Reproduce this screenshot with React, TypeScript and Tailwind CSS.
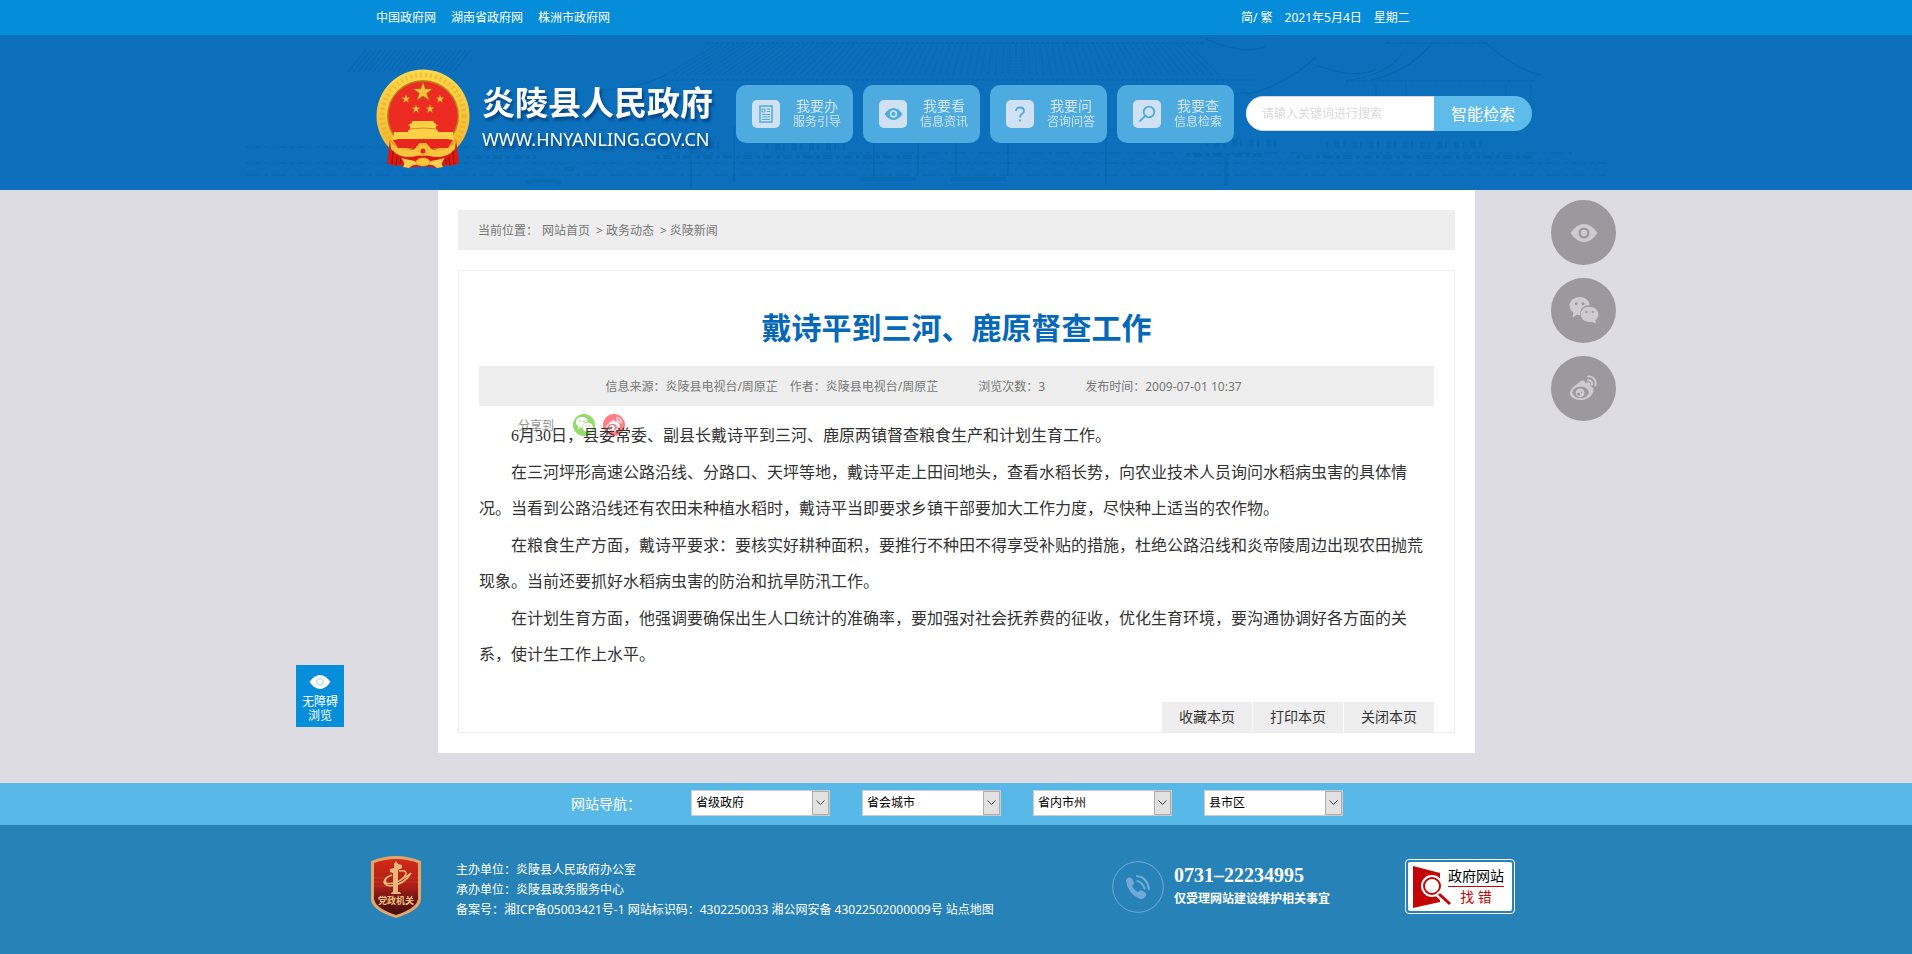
import type { ReactNode } from 'react';

const topLinks = ['中国政府网', '湖南省政府网', '株洲市政府网'];

const selects = [
  { id: 'province', label: '省级政府' },
  { id: 'capital', label: '省会城市' },
  { id: 'city', label: '省内市州' },
  { id: 'county', label: '县市区' },
];

const paragraphs = [
  <><span className="font-['Liberation_Serif'] leading-none">6</span>月<span className="font-['Liberation_Serif'] leading-none">30</span>日，县委常委、副县长戴诗平到三河、鹿原两镇督查粮食生产和计划生育工作。</>,
  '在三河坪形高速公路沿线、分路口、天坪等地，戴诗平走上田间地头，查看水稻长势，向农业技术人员询问水稻病虫害的具体情况。当看到公路沿线还有农田未种植水稻时，戴诗平当即要求乡镇干部要加大工作力度，尽快种上适当的农作物。',
  '在粮食生产方面，戴诗平要求：要核实好耕种面积，要推行不种田不得享受补贴的措施，杜绝公路沿线和炎帝陵周边出现农田抛荒现象。当前还要抓好水稻病虫害的防治和抗旱防汛工作。',
  '在计划生育方面，他强调要确保出生人口统计的准确率，要加强对社会抚养费的征收，优化生育环境，要沟通协调好各方面的关系，使计生工作上水平。',
];

const star = 'M0 -10 2.3 -3.1 9.5 -3.1 3.8 1.2 5.9 8.1 0 4 -5.9 8.1 -3.8 1.2 -9.5 -3.1 -2.3 -3.1Z';

function Emblem() {
  return (
    <svg viewBox="0 0 94 100" className="h-[100px] w-[94px] shrink-0" aria-hidden="true">
      <defs>
        <linearGradient id="gold" x1="0" y1="0" x2="0" y2="1">
          <stop offset="0" stopColor="#ffd94a" />
          <stop offset="1" stopColor="#f1b32c" />
        </linearGradient>
      </defs>
      <circle cx="47" cy="47" r="46.5" fill="url(#gold)" />
      <circle cx="47" cy="47" r="41" fill="none" stroke="#e3a02a" strokeWidth="5" strokeDasharray="2 3" opacity=".45" />
      <circle cx="47" cy="47" r="36" fill="#b9811c" />
      <circle cx="47" cy="47" r="34.5" fill="#ee2b23" />
      <path d="M18 63h59l1 7H17z" fill="#ffd145" />
      <path d="M32 61h30v3H32zM34 55h26v6H34zM32 57l3-3h24l3 3zM36 52h22v2H36z" fill="#ffcf45" />
      <path d="M33 60q14-2 28 0" stroke="#d38d1d" fill="none" />
      <path d="M17 71h60l-5 8H22z" fill="#e8251e" />
      <path d="M14 71 11 94Q18 98 24 96L31 99Q47 96 63 99L70 96Q76 98 83 94L80 71 68 84Q47 90 26 84Z" fill="#dc1a13" />
      <path d="M14 71Q20 81 32 82 39 82 41 77L44 74H50L53 77Q55 82 62 82 74 81 80 71L79 80Q71 89 60 88 51 87 47 84 43 87 34 88 23 89 15 80Z" fill="#f8c63e" />
      <path d="M17 82 16 95M21 87 20 96M25 89 24 95M77 82 78 95M73 87 74 96M69 89 70 95" stroke="#a50d0b" strokeWidth="1.200" />
      <path d="M25 89Q33 91 39 92L42 96Q37 95 33 99L27 98Q30 94 25 89ZM69 89Q61 91 55 92L52 96Q57 95 61 99L67 98Q64 94 69 89Z" fill="#fbcf50" />
      <circle cx="47" cy="80" r="5" fill="#f9c63c" stroke="#e49f20" strokeDasharray="2 1" />
      <circle cx="47" cy="82" r="2.500" fill="#e8251e" />
      <ellipse cx="47" cy="93" rx="7" ry="4" fill="#f9c63c" stroke="#e49f20" strokeDasharray="2 1" />
      <g fill="#f6c23b" stroke="#a9741b" strokeWidth=".8">
        <path d={star} transform="translate(47 23)" />
        <path d={star} transform="translate(30 30) scale(.45)" />
        <path d={star} transform="translate(64 30) scale(.45)" />
        <path d={star} transform="translate(40 40) scale(.45)" />
        <path d={star} transform="translate(54 40) scale(.45)" />
      </g>
    </svg>
  );
}

// Faint palace roofs and columns behind the header
function Skyline() {
  return (
    <svg viewBox="0 0 1500 155" className="absolute top-0 left-1/2 h-[155px] w-[1500px] -translate-x-1/2" fill="none" stroke="#084f8c" aria-hidden="true">
      <g opacity=".2" strokeWidth="1.2">
        {Array.from({ length: 80 }, (_, i) => (
          <path key={i} d={`M${510 + i * 6} 10L${460 + i * 7} 40`} strokeDasharray="2 1" />
        ))}
        {Array.from({ length: 22 }, (_, i) => (
          <path key={i} d={`M${160 + i * 5} 15l-18 22`} />
        ))}
      </g>
      <g opacity=".28" strokeWidth="1.2">
        <path d="M500 8H1000M455 45H1050" strokeDasharray="3 2" />
        <path d="M460 40Q430 55 390 55M1000 4Q1035 20 1060 12M1040 60Q1080 50 1110 22M1110 30Q1150 45 1170 34M1165 45Q1200 38 1225 10M1050 57Q1020 60 960 62" />
        <path d="M1180 8H1280M1280 8Q1310 35 1335 40M1195 20Q1180 40 1140 46H1330M1170 50v18M1200 50v18M1300 50v18M1325 50v18" strokeDasharray="5 1" />
        <path d="M40 128H1400M40 112H360M460 118H1370M40 140H1400" strokeDasharray="14 5 3 4" opacity=".7" />
      </g>
      <g opacity=".2" strokeWidth="4">
        <path d="M450 122H720M980 120H1060M1090 122H1330M260 122H330" strokeDasharray="4 3 9 4" />
        <path d="M485 92v60M528 92v55M668 92v50M712 90v50M750 90v50M802 90v50M900 100v50" strokeWidth="2" />
        <path d="M460 110h60M560 112h80M1000 108h70M1120 110h160" strokeWidth="7" strokeDasharray="2 7 5 3" />
        <path d="M320 148q18-6 35 0M358 134h10M655 144h55M745 144h55M1020 150v-28" strokeWidth="4" />
      </g>
    </svg>
  );
}

function EyeIcon({ className, pupil }: { className: string; pupil: string }) {
  return (
    <svg viewBox="0 0 30 20" className={className} aria-hidden="true">
      <path d="M0 10Q7 0 15 0t15 10Q23 20 15 20T0 10Z" fill="currentColor" />
      <circle cx="15" cy="10" r="4.800" fill="none" stroke={pupil} strokeWidth="2.600" />
    </svg>
  );
}

function WechatIcon({ className, eye }: { className: string; eye: string }) {
  return (
    <svg viewBox="0 0 30 28" className={className} aria-hidden="true">
      <path d="M10.500 0C4.700 0 0 4 0 9c0 3 1.600 5.400 4 7l-1 5.500 4.500-3 3.500.3A9 9 0 0 1 21 8.500C20.500 3.500 16 0 10.500 0Z" fill="currentColor" />
      <path d="M20.500 10C15.300 10 11.500 13.700 11.500 18c0 4.500 4 8 9 8l3.300-.4 3.700 2.400-.8-3.800C28.800 22.600 30 20.500 30 18c0-4.300-4-8-9.500-8Z" fill="currentColor" />
      <g fill={eye}>
        <circle cx="7" cy="7" r="1.500" /><circle cx="14" cy="7" r="1.500" />
        <circle cx="17.500" cy="15.500" r="1.200" /><circle cx="24" cy="15.500" r="1.200" />
      </g>
    </svg>
  );
}

function WeiboIcon({ className, hole }: { className: string; hole: string }) {
  return (
    <svg viewBox="0 0 28 28" className={className} aria-hidden="true">
      <path d="M9 8c3-3 7-3.500 6.500.5 4-1.500 7-.5 5.500 3 3 1 4 3 3 6-1.500 5-7 8.500-13 8.500S0 23 0 18.500C0 15 4.500 11.500 9 8Z" fill="currentColor" />
      <ellipse cx="11" cy="18" rx="8.500" ry="6" fill={hole} />
      <circle cx="10.500" cy="18.500" r="4.600" fill="currentColor" />
      <circle cx="9" cy="20" r="1.500" fill={hole} /><circle cx="12" cy="18" r=".8" fill={hole} />
      <path d="M18.500 1.500c5-.8 9.500 4 7.800 9.200M18.500 5.500c2.800-.5 5 2 4.200 4.700" fill="none" stroke="currentColor" strokeWidth="2" strokeLinecap="round" />
    </svg>
  );
}

function QuickLink({ title, sub, children }: { title: string; sub: string; children: ReactNode }) {
  return (
    <a href="#" className="flex h-[58px] w-[117px] items-center gap-[13px] rounded-[10px] bg-[#4dabdf] pl-4 text-[#d3e4f3]">
      <span className="flex size-7 items-center justify-center rounded-[5px] bg-[#d0e2f2] text-[#4dabdf]">{children}</span>
      <span className="flex flex-col items-center text-xs leading-4">
        <span className="text-sm leading-4">{title}</span>
        {sub}
      </span>
    </a>
  );
}

function FloatButton({ label, children }: { label: string; children: ReactNode }) {
  return (
    <button aria-label={label} className="flex size-[65px] items-center justify-center rounded-full bg-[#9b999d] text-[#cdcccf]">
      {children}
    </button>
  );
}

function Shield() {
  return (
    <svg viewBox="0 0 52 64" className="h-16 w-[52px] shrink-0" role="img" aria-label="党政机关">
      <defs>
        <linearGradient id="shield" x1="0" y1="0" x2="0" y2="1">
          <stop offset="0" stopColor="#d42a18" />
          <stop offset=".5" stopColor="#a81f17" />
          <stop offset=".7" stopColor="#711713" />
          <stop offset="1" stopColor="#430d0c" />
        </linearGradient>
      </defs>
      <path d="M1 6Q14 1 26 1t25 5V44Q51 55 26 63 1 55 1 44Z" fill="#e2a768" />
      <path d="M4 8Q15 4 26 4t22 4V43Q48 53 26 60 4 53 4 43Z" fill="url(#shield)" />
      <path d="M4 23h10M38 23h10M4 27h12M36 27h12M4 31h13" stroke="#d33a20" strokeWidth=".7" />
      <path d="M24 9l2-3 2 3 4 1v3l-4 2v23h-5V18l-3-1v-3l4-1z" fill="#eab779" />
      <path d="M22 20Q13 23 16 28 25 31 41 18 34 30 20 31 10 29 17 22M29 16q7-1 7 2 0 4-7 8" fill="none" stroke="#eab779" strokeWidth="1.600" />
      <path d="M22 37h8l1 2H21z" fill="#eab779" />
      <text x="26" y="49" textAnchor="middle" fontSize="9" fontWeight="700" fill="#f0c083">党政机关</text>
    </svg>
  );
}

function ReportBadge() {
  return (
    <a href="#" className="block rounded-[4px] border border-white p-[2px]">
      <span className="flex h-[49px] w-[104px] items-center rounded-[2px] bg-white pl-1">
        <svg viewBox="0 0 40 44" className="h-11 w-10 shrink-0" aria-hidden="true">
          <path d="M1 1 28 8V37L1 43Z" fill="#c30508" />
          <circle cx="20" cy="21" r="11" fill="#fff" />
          <circle cx="20" cy="21" r="8" fill="none" stroke="#c30508" strokeWidth="2" />
          <path d="M25 28 38 41" stroke="#fff" strokeWidth="6" />
          <path d="M27 29 38 39" stroke="#c30508" strokeWidth="3" />
        </svg>
        <span className="-ml-1 flex flex-col items-center text-sm leading-5 text-black">
          <span className="border-b border-[#c30508]">政府网站</span>
          <span className="text-[#c30508]">找 错</span>
        </span>
      </span>
    </a>
  );
}

export default function App() {
  return (
    <div className="min-h-screen bg-[#dddce2] font-['Noto_Sans','Noto_Sans_CJK_SC',sans-serif] text-xs">
      <div className="bg-[#058dd9] text-white">
        <div className="mx-auto flex h-[35px] max-w-[1200px] items-center justify-between px-5">
          <nav className="flex gap-[15px]">
            {topLinks.map((l) => <a key={l} href="#">{l}</a>)}
          </nav>
          <div className="flex w-[295px] gap-3">
            <a href="#">简/ 繁</a>
            <span>2021年5月4日</span>
            <span>星期二</span>
          </div>
        </div>
      </div>

      <header className="relative overflow-hidden bg-[#0b6fbc]">
        <Skyline />
        <div className="relative mx-auto flex h-[155px] max-w-[1200px] items-center px-5 pt-[2px]">
          <a href="#" className="mt-[11px] flex w-[360px] items-center gap-3 text-white">
            <Emblem />
            <span className="flex flex-col whitespace-nowrap [text-shadow:2px_3px_3px_rgba(0,40,90,0.6)]">
              <span className="text-[33px] leading-10 font-bold">炎陵县人民政府</span>
              <span className="text-lg leading-8">WWW.HNYANLING.GOV.CN</span>
            </span>
          </a>
          <nav className="flex gap-[10px]">
            <QuickLink title="我要办" sub="服务引导">
              <svg viewBox="0 0 14 18" className="h-[18px] w-[14px]" fill="none" stroke="currentColor" aria-hidden="true">
                <rect x="1" y="1" width="12" height="16" strokeWidth="1.500" />
                <path d="M3 4h3v3H3zM8 4h3M8 6.500h3M3 9.500h8M3 12h8M3 14.500h8" />
              </svg>
            </QuickLink>
            <QuickLink title="我要看" sub="信息资讯">
              <EyeIcon className="h-3 w-[19px]" pupil="#d0e2f2" />
            </QuickLink>
            <QuickLink title="我要问" sub="咨询问答">
              <svg viewBox="0 0 12 16" className="h-4 w-3" fill="none" stroke="currentColor" strokeWidth="1.800" aria-hidden="true">
                <path d="M2 5Q2 1.500 6 1.500T10 5Q10 7 7.500 8.300 6 9.200 6 11.500M6 13.500v2" />
              </svg>
            </QuickLink>
            <QuickLink title="我要查" sub="信息检索">
              <svg viewBox="0 0 18 18" className="size-[18px]" fill="none" stroke="currentColor" strokeWidth="1.800" aria-hidden="true">
                <circle cx="11" cy="7" r="5.300" />
                <path d="M7 11 1.500 16.500" />
              </svg>
            </QuickLink>
          </nav>
          <form className="ml-3 flex h-[35px] shrink-0" onSubmit={(e) => e.preventDefault()}>
            <input
              type="text"
              aria-label="搜索"
              placeholder="请输入关键词进行搜索"
              className="w-[188px] rounded-l-full border-y border-[#d5d5d5] bg-white px-4 text-xs placeholder:text-[#d8d8d8]"
            />
            <button type="submit" className="w-[98px] rounded-r-full bg-[#5ebbea] text-base text-white">智能检索</button>
          </form>
        </div>
      </header>

      <div className="flex justify-center pb-[30px]">
        <aside className="w-[142px] self-end pb-[26px]">
          <button className="flex w-12 flex-col items-center bg-[#068eda] pt-[10px] pb-1 text-xs leading-[14px] text-white">
            <EyeIcon className="mb-[6px] h-[14px] w-[22px]" pupil="#c6e4f7" />
            <span>无障碍</span>
            <span>浏览</span>
          </button>
        </aside>

        <main className="w-full max-w-[1037px] bg-white p-5 text-[#777]">
          <nav className="flex h-10 items-center bg-[#eee] px-5 pt-[2px]">
            <span className="w-16">当前位置：</span>
            <a href="#">网站首页</a>
            <span className="ml-[6px]">&gt;</span>
            <a href="#" className="ml-[3px]">政务动态</a>
            <span className="ml-[6px]">&gt;</span>
            <a href="#" className="ml-[3px]">炎陵新闻</a>
          </nav>

          <article className="mt-5 border border-[#eee] px-5">
            <h1 className="mt-[35px] mb-4 text-center text-[30px] leading-[44px] font-bold text-[#0568b8]">戴诗平到三河、鹿原督查工作</h1>
            <div className="flex h-10 items-center justify-center bg-[#eee] pt-[2px] pr-[66px]">
              <span>信息来源：炎陵县电视台/周原芷</span>
              <span className="ml-3">作者：炎陵县电视台/周原芷</span>
              <span className="ml-10">浏览次数：3</span>
              <span className="ml-10">发布时间：2009-07-01 10:37</span>
            </div>

            <div className="relative pt-[10px]">
              <div className="absolute top-2 left-[39px] flex items-center opacity-80">
                <span className="w-[55px] pt-[2px]">分享到</span>
                <a href="#" aria-label="微信" className="mr-2 flex size-[22px] items-center justify-center rounded-full bg-[#7ad348] text-white">
                  <WechatIcon className="h-4 w-[17px]" eye="#7ad348" />
                </a>
                <a href="#" aria-label="微博" className="flex size-[22px] items-center justify-center rounded-full bg-[#ff5d67] text-white">
                  <WeiboIcon className="size-4" hole="#ff5d67" />
                </a>
              </div>
              <div className="relative flex flex-col gap-px font-['Noto_Sans_CJK_SC',sans-serif] text-base leading-9 text-[#333]">
                {paragraphs.map((p, i) => <p key={i} className="indent-8">{p}</p>)}
              </div>
            </div>

            <div className="mt-[31px] flex justify-end gap-px text-sm text-[#333]">
              <button className="h-[30px] w-[90px] bg-[#eee]">收藏本页</button>
              <button className="h-[30px] w-[90px] bg-[#eee]">打印本页</button>
              <button className="h-[30px] w-[90px] bg-[#eee]">关闭本页</button>
            </div>
          </article>
        </main>

        <aside className="flex w-[141px] flex-col items-end gap-[13px] pt-[10px]">
          <FloatButton label="无障碍"><EyeIcon className="h-[18px] w-[30px]" pupil="#9b999d" /></FloatButton>
          <FloatButton label="微信"><WechatIcon className="h-[27px] w-[30px]" eye="#9b999d" /></FloatButton>
          <FloatButton label="微博"><WeiboIcon className="size-[27px]" hole="#9b999d" /></FloatButton>
        </aside>
      </div>

      <div className="flex h-[42px] items-center justify-center bg-[#58b8e7] pl-[2px]">
        <span className="w-[120px] text-sm text-white">网站导航：</span>
        <div className="flex gap-8 pb-[2px]">
          {selects.map(({ id, label }) => (
            <div key={id} className="relative">
              <select id={id} aria-label={label} className="block h-[26px] w-[139px] appearance-none border border-[#ccc] bg-white pl-1 text-xs text-black">
                <option>{label}</option>
              </select>
              <span className="pointer-events-none absolute top-px right-px flex h-6 w-[17px] items-center justify-center border border-[#adadad] bg-[#e1e1e1]">
                <svg viewBox="0 0 9 6" className="h-[6px] w-[9px]" fill="none" stroke="#444" aria-hidden="true"><path d="M.5 .5 4.500 4.500 8.500 .5" /></svg>
              </span>
            </div>
          ))}
        </div>
      </div>

      <footer className="bg-[#2782b7] text-white">
        <div className="mx-auto flex h-[129px] max-w-[1200px] items-start pt-[30px] pr-[41px] pl-[14px]">
          <Shield />
          <div className="ml-[34px] w-[656px] pt-[5px] leading-5">
            <p>主办单位：炎陵县人民政府办公室</p>
            <p>承办单位：炎陵县政务服务中心</p>
            <p>备案号：湘ICP备05003421号-1 网站标识码：4302250033 湘公网安备 43022502000009号 <a href="#">站点地图</a></p>
          </div>
          <div className="flex items-center gap-[10px] pt-[6px]">
            <svg viewBox="0 0 52 52" className="size-[52px]" fill="none" stroke="#72a9d8" aria-hidden="true">
              <circle cx="26" cy="26" r="25.300" />
              <path d="M14 20q0-3 3-3.500 3-.5 4 3l1 3-2 2.500q2 4 6 6l3-2 4 2.500q2 1.500.5 4-2 3-5.500 2.500Q16 33 14 20Z" fill="#72a9d8" stroke="none" />
              <path d="M25 15q10 1 12 13M25.500 20q5 1.500 7 7.500" strokeWidth="2.200" strokeLinecap="round" />
            </svg>
            <div className="font-bold">
              <p className="font-['Liberation_Serif',serif] text-xl leading-6">0731–22234995</p>
              <p className="leading-6">仅受理网站建设维护相关事宜</p>
            </div>
          </div>
          <div className="ml-auto pt-1"><ReportBadge /></div>
        </div>
      </footer>
    </div>
  );
}
